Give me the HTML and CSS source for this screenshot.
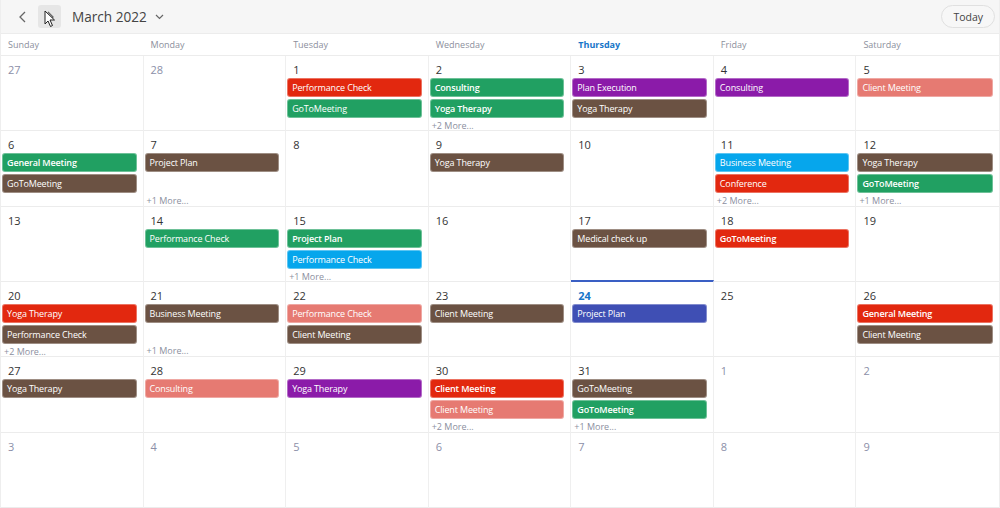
FILE: index.html
```html
<!DOCTYPE html>
<html>
<head>
<meta charset="utf-8">
<link rel="stylesheet" href="styles.css">
</head>
<body>
<div class="scheduler">
  <div class="toolbar">
    <div class="nav">
      <button class="icon-btn"><svg width="10" height="12" viewBox="0 0 10 12"><path d="M7 1 L2 6 L7 11" fill="none" stroke="#666" stroke-width="1.3"/></svg></button>
      <button class="icon-btn hover"><svg width="10" height="12" viewBox="0 0 10 12"><path d="M3 1 L8 6 L3 11" fill="none" stroke="#666" stroke-width="1.3"/></svg><svg class="cursor" width="12" height="18" viewBox="0 0 12 18"><path d="M1 1 L1 14 L4 11 L6.5 16.5 L8.5 15.5 L6 10 L10.5 10 Z" fill="#fff" stroke="#222" stroke-width="1"/></svg></button>
      <div class="title">March 2022 <svg width="9" height="6" viewBox="0 0 9 6"><path d="M1 1 L4.5 4.5 L8 1" fill="none" stroke="#666" stroke-width="1.2"/></svg></div>
    </div>
    <button class="today">Today</button>
  </div>
  <div class="weekdays">
    <div class="wd">Sunday</div><div class="wd">Monday</div><div class="wd">Tuesday</div><div class="wd">Wednesday</div><div class="wd current">Thursday</div><div class="wd">Friday</div><div class="wd">Saturday</div>
  </div>
  <div class="month">
    <!-- row 1 -->
    <div class="cell other"><div class="date">27</div></div>
    <div class="cell other"><div class="date">28</div></div>
    <div class="cell"><div class="date">1</div><div class="ev red">Performance Check</div><div class="ev green">GoToMeeting</div></div>
    <div class="cell"><div class="date">2</div><div class="ev green b">Consulting</div><div class="ev green b">Yoga Therapy</div><div class="more">+2 More...</div></div>
    <div class="cell"><div class="date">3</div><div class="ev purple">Plan Execution</div><div class="ev brown">Yoga Therapy</div></div>
    <div class="cell"><div class="date">4</div><div class="ev purple">Consulting</div></div>
    <div class="cell last"><div class="date">5</div><div class="ev salmon">Client Meeting</div></div>
    <!-- row 2 -->
    <div class="cell"><div class="date">6</div><div class="ev green b">General Meeting</div><div class="ev brown">GoToMeeting</div></div>
    <div class="cell"><div class="date">7</div><div class="ev brown">Project Plan</div><div class="more">+1 More...</div></div>
    <div class="cell"><div class="date">8</div></div>
    <div class="cell"><div class="date">9</div><div class="ev brown">Yoga Therapy</div></div>
    <div class="cell"><div class="date">10</div></div>
    <div class="cell"><div class="date">11</div><div class="ev blue">Business Meeting</div><div class="ev red">Conference</div><div class="more">+2 More...</div></div>
    <div class="cell last"><div class="date">12</div><div class="ev brown">Yoga Therapy</div><div class="ev green b">GoToMeeting</div><div class="more">+1 More...</div></div>
    <!-- row 3 -->
    <div class="cell"><div class="date">13</div></div>
    <div class="cell"><div class="date">14</div><div class="ev green">Performance Check</div></div>
    <div class="cell"><div class="date">15</div><div class="ev green b">Project Plan</div><div class="ev blue">Performance Check</div><div class="more">+1 More...</div></div>
    <div class="cell"><div class="date">16</div></div>
    <div class="cell"><div class="date">17</div><div class="ev brown">Medical check up</div></div>
    <div class="cell"><div class="date">18</div><div class="ev red b">GoToMeeting</div></div>
    <div class="cell last"><div class="date">19</div></div>
    <!-- row 4 -->
    <div class="cell"><div class="date">20</div><div class="ev red">Yoga Therapy</div><div class="ev brown">Performance Check</div><div class="more">+2 More...</div></div>
    <div class="cell"><div class="date">21</div><div class="ev brown">Business Meeting</div><div class="more">+1 More...</div></div>
    <div class="cell"><div class="date">22</div><div class="ev salmon">Performance Check</div><div class="ev brown">Client Meeting</div></div>
    <div class="cell"><div class="date">23</div><div class="ev brown">Client Meeting</div></div>
    <div class="cell today-cell"><div class="date">24</div><div class="ev indigo">Project Plan</div></div>
    <div class="cell"><div class="date">25</div></div>
    <div class="cell last"><div class="date">26</div><div class="ev red b">General Meeting</div><div class="ev brown">Client Meeting</div></div>
    <!-- row 5 -->
    <div class="cell"><div class="date">27</div><div class="ev brown">Yoga Therapy</div></div>
    <div class="cell"><div class="date">28</div><div class="ev salmon">Consulting</div></div>
    <div class="cell"><div class="date">29</div><div class="ev purple">Yoga Therapy</div></div>
    <div class="cell"><div class="date">30</div><div class="ev red b">Client Meeting</div><div class="ev salmon">Client Meeting</div><div class="more">+2 More...</div></div>
    <div class="cell"><div class="date">31</div><div class="ev brown">GoToMeeting</div><div class="ev green b">GoToMeeting</div><div class="more">+1 More...</div></div>
    <div class="cell other"><div class="date">1</div></div>
    <div class="cell other last"><div class="date">2</div></div>
    <!-- row 6 -->
    <div class="cell other"><div class="date">3</div></div>
    <div class="cell other"><div class="date">4</div></div>
    <div class="cell other"><div class="date">5</div></div>
    <div class="cell other"><div class="date">6</div></div>
    <div class="cell other"><div class="date">7</div></div>
    <div class="cell other"><div class="date">8</div></div>
    <div class="cell other last"><div class="date">9</div></div>
  </div>
</div>
</body>
</html>
```
FILE: styles.css
```css
* { box-sizing: border-box; }
html, body { margin: 0; padding: 0; background: #fff; }
body { font-family: "Open Sans", "Noto Sans", sans-serif; color: #333; width: 1000px; height: 508px; overflow: hidden; }
.scheduler { width: 1000px; height: 508px; display: flex; flex-direction: column; border-left: 1px solid #eee; border-right: 1px solid #eee; }
.toolbar { flex: 0 0 34px; height: 34px; background: #f6f6f6; display: flex; align-items: center; justify-content: space-between; padding: 0 4px 0 10px; border-bottom: 1px solid #ececec; }
.nav { display: flex; align-items: center; gap: 4px; }
.icon-btn { width: 23px; height: 23px; border: none; background: transparent; border-radius: 3px; display: flex; align-items: center; justify-content: center; padding: 0; position: relative; }
.icon-btn.hover { background: #e6e6e6; }
.cursor { position: absolute; left: 6px; top: 5px; }
.title { font-size: 13.6px; color: #444; margin-left: 7px; display: flex; align-items: center; gap: 8px; }
.today { height: 23px; padding: 0 11px; border: 1px solid #e0e0e0; border-radius: 12px; background: #f7f7f7; font-family: inherit; font-size: 10.5px; color: #444; }
.weekdays { flex: 0 0 22px; height: 22px; display: grid; grid-template-columns: repeat(7, 1fr); border-bottom: 1px solid #ececec; }
.wd { font-size: 9px; color: #8c8f9c; padding-left: 7px; line-height: 21px; }
.wd.current { color: #1776c9; font-weight: 700; }
.month { flex: 1 1 auto; min-height: 0; display: grid; grid-template-columns: repeat(7, minmax(0, 1fr)); grid-template-rows: repeat(6, minmax(0, 1fr)); }
.cell { border-right: 1px solid #efefef; border-bottom: 1px solid #ececec; display: flex; flex-direction: column; padding: 0 6px 0 1px; min-width: 0; min-height: 0; position: relative; }
.cell.last { border-right: none; }
.date { flex: 0 0 22px; height: 22px; font-size: 11px; line-height: 14px; padding-left: 6px; padding-top: 7px; color: #333; }
.cell.other .date { color: #8c8fa8; }
.today-cell { border-top: 2px solid #3a5fc4; margin-top: -2px; }
.today-cell .date { color: #1776c9; font-weight: 700; }
.ev { flex: 0 0 19px; height: 19px; margin-bottom: 2px; border-radius: 3px; color: #fff; font-size: 9px; letter-spacing: -0.15px; line-height: 17px; padding-left: 4px; white-space: nowrap; overflow: hidden; border: 1px solid rgba(255,255,255,0.35); }
.ev.b { font-weight: 600; }
.red { background: #e2280f; }
.green { background: #21a062; }
.purple { background: #8b1ba9; }
.brown { background: #6b5243; }
.salmon { background: #e67a72; }
.blue { background: #06a6ec; }
.indigo { background: #3f4fb4; }
.more { margin-top: auto; flex: 0 0 11px; font-size: 9px; color: #8c8fa0; padding-left: 2px; line-height: 11px; margin-bottom: 0; }
```
